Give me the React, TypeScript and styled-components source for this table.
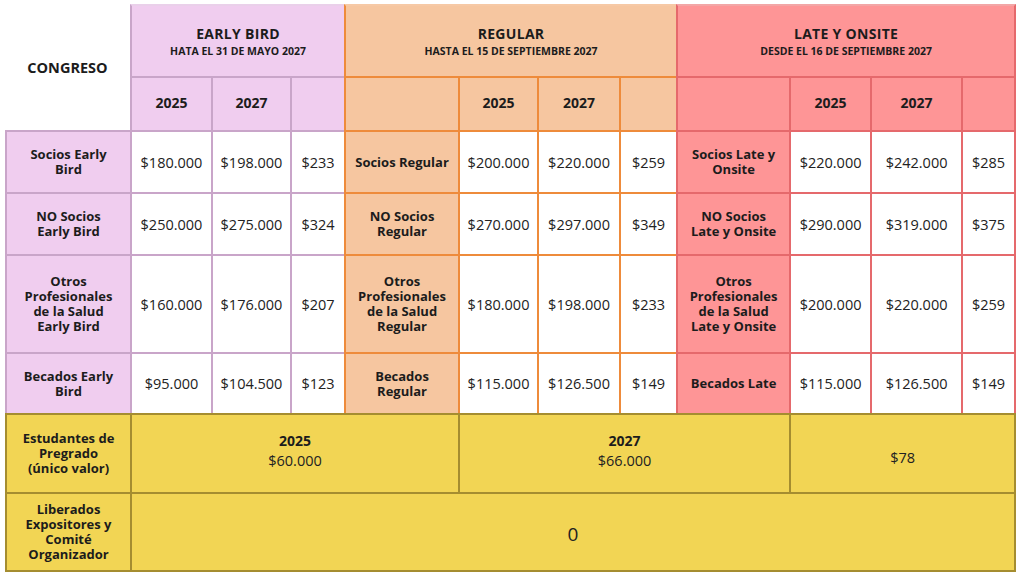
import styled, { createGlobalStyle, css } from "styled-components";

const GlobalStyle = createGlobalStyle`
  html, body {
    margin: 0;
    background: #ffffff;
    font-family: "Open Sans", "Noto Sans", sans-serif;
    color: #1c1c1c;
  }
`;

type Tone = "pink" | "orange" | "red" | "gold";

const palette: Record<Tone, { bg: string; line: string; soft: string }> = {
  pink: { bg: "#f0cdef", line: "#c9a5c9", soft: "#ead0ea" },
  orange: { bg: "#f6c6a0", line: "#ee8b3b", soft: "#f6c9a6" },
  red: { bg: "#fe9596", line: "#e5696c", soft: "#f2a6a6" },
  gold: { bg: "#f2d554", line: "#a58d30", soft: "#a58d30" },
};

const Page = styled.div`
  padding: 4px 8px 0 5px;
`;

const Table = styled.table`
  border-collapse: separate;
  border-spacing: 0;
  table-layout: fixed;
  width: 1011px;
`;

const Row = styled.tr<{ $h: number }>`
  height: ${(p) => p.$h}px;
`;

const Cell = styled.td<{
  $tone?: Tone;
  $fill?: boolean;
  $last?: boolean;
  $bottom?: boolean;
  $softTop?: boolean;
}>`
  box-sizing: border-box;
  padding: 0 6px;
  text-align: center;
  vertical-align: middle;
  font-size: 14.5px;
  line-height: 17px;
  color: #222;
  ${(p) =>
    p.$tone
      ? css`
          background: ${p.$fill ? palette[p.$tone].bg : "#ffffff"};
          border-left: 2px solid ${palette[p.$tone].line};
          border-top: 2px solid
            ${p.$softTop ? palette[p.$tone].soft : palette[p.$tone].line};
          ${p.$last && `border-right: 2px solid ${palette[p.$tone].line};`}
          ${p.$bottom && `border-bottom: 2px solid ${palette[p.$tone].line};`}
        `
      : css`
          background: #ffffff;
        `}
`;

const Label = styled(Cell)`
  font-weight: 700;
  font-size: 13px;
  line-height: 14.8px;
  color: #1c1c1c;
  white-space: pre-line;
  padding: 0 4px;
`;

const Stacked = styled(Cell)`
  line-height: 20px;
  padding-bottom: 5px;
`;

const Single = styled(Cell)`
  padding-top: 8px;
`;

const Corner = styled.td`
  font-weight: 700;
  font-size: 14.5px;
  text-align: center;
  vertical-align: middle;
  padding-top: 2px;
`;

const Title = styled.div`
  font-size: 14px;
  font-weight: 700;
  letter-spacing: 0.3px;
  line-height: 18px;
  color: #1c1c1c;
`;

const Sub = styled.div`
  font-size: 10.5px;
  font-weight: 700;
  line-height: 14px;
  margin-top: 1px;
  color: #1c1c1c;
`;

const Year = styled.span`
  display: block;
  font-weight: 700;
  font-size: 14px;
  color: #1c1c1c;
`;

const HeadYear = styled(Year)`
  padding-bottom: 3px;
`;

const Zero = styled.span`
  display: inline-block;
  font-size: 19px;
  margin-top: 5px;
`;

const widths = [125, 81, 79, 54, 114, 79, 82, 57, 113, 81, 91, 55];

type Tier = { tone: Tone; label: string; v: [string, string, string] };

const rows: { h: number; early: Tier; regular: Tier; late: Tier }[] = [
  {
    h: 62,
    early: { tone: "pink", label: "Socios Early\nBird", v: ["$180.000", "$198.000", "$233"] },
    regular: { tone: "orange", label: "Socios Regular", v: ["$200.000", "$220.000", "$259"] },
    late: { tone: "red", label: "Socios Late y\nOnsite", v: ["$220.000", "$242.000", "$285"] },
  },
  {
    h: 62,
    early: { tone: "pink", label: "NO Socios\nEarly Bird", v: ["$250.000", "$275.000", "$324"] },
    regular: { tone: "orange", label: "NO Socios\nRegular", v: ["$270.000", "$297.000", "$349"] },
    late: { tone: "red", label: "NO Socios\nLate y Onsite", v: ["$290.000", "$319.000", "$375"] },
  },
  {
    h: 98,
    early: {
      tone: "pink",
      label: "Otros\nProfesionales\nde la Salud\nEarly Bird",
      v: ["$160.000", "$176.000", "$207"],
    },
    regular: {
      tone: "orange",
      label: "Otros\nProfesionales\nde la Salud\nRegular",
      v: ["$180.000", "$198.000", "$233"],
    },
    late: {
      tone: "red",
      label: "Otros\nProfesionales\nde la Salud\nLate y Onsite",
      v: ["$200.000", "$220.000", "$259"],
    },
  },
  {
    h: 61,
    early: { tone: "pink", label: "Becados Early\nBird", v: ["$95.000", "$104.500", "$123"] },
    regular: { tone: "orange", label: "Becados\nRegular", v: ["$115.000", "$126.500", "$149"] },
    late: { tone: "red", label: "Becados Late", v: ["$115.000", "$126.500", "$149"] },
  },
];

function TierCells({ tier, last }: { tier: Tier; last?: boolean }) {
  return (
    <>
      <Label $tone={tier.tone} $fill>
        {tier.label}
      </Label>
      {tier.v.map((v, i) => (
        <Cell key={i} $tone={tier.tone} $last={last && i === 2}>
          {v}
        </Cell>
      ))}
    </>
  );
}

export default function App() {
  return (
    <Page>
      <GlobalStyle />
      <Table>
        <colgroup>
          {widths.map((w, i) => (
            <col key={i} style={{ width: w }} />
          ))}
        </colgroup>
        <tbody>
          <Row $h={72}>
            <Corner rowSpan={2}>CONGRESO</Corner>
            <Cell colSpan={3} $tone="pink" $fill $softTop>
              <Title>EARLY BIRD</Title>
              <Sub>HATA EL 31 DE MAYO 2027</Sub>
            </Cell>
            <Cell colSpan={4} $tone="orange" $fill $softTop>
              <Title>REGULAR</Title>
              <Sub>HASTA EL 15 DE SEPTIEMBRE 2027</Sub>
            </Cell>
            <Cell colSpan={4} $tone="red" $fill $softTop $last>
              <Title>LATE Y ONSITE</Title>
              <Sub>DESDE EL 16 DE SEPTIEMBRE 2027</Sub>
            </Cell>
          </Row>
          <Row $h={54}>
            <Cell $tone="pink" $fill>
              <HeadYear>2025</HeadYear>
            </Cell>
            <Cell $tone="pink" $fill>
              <HeadYear>2027</HeadYear>
            </Cell>
            <Cell $tone="pink" $fill />
            <Cell $tone="orange" $fill />
            <Cell $tone="orange" $fill>
              <HeadYear>2025</HeadYear>
            </Cell>
            <Cell $tone="orange" $fill>
              <HeadYear>2027</HeadYear>
            </Cell>
            <Cell $tone="orange" $fill />
            <Cell $tone="red" $fill />
            <Cell $tone="red" $fill>
              <HeadYear>2025</HeadYear>
            </Cell>
            <Cell $tone="red" $fill>
              <HeadYear>2027</HeadYear>
            </Cell>
            <Cell $tone="red" $fill $last />
          </Row>
          {rows.map((r, i) => (
            <Row key={i} $h={r.h}>
              <TierCells tier={r.early} />
              <TierCells tier={r.regular} />
              <TierCells tier={r.late} last />
            </Row>
          ))}
          <Row $h={79}>
            <Label $tone="gold" $fill>
              {"Estudantes de\nPregrado\n(único valor)"}
            </Label>
            <Stacked colSpan={4} $tone="gold" $fill>
              <Year>2025</Year>$60.000
            </Stacked>
            <Stacked colSpan={4} $tone="gold" $fill>
              <Year>2027</Year>$66.000
            </Stacked>
            <Single colSpan={3} $tone="gold" $fill $last>
              $78
            </Single>
          </Row>
          <Row $h={80}>
            <Label $tone="gold" $fill $bottom>
              {"Liberados\nExpositores y\nComité\nOrganizador"}
            </Label>
            <Cell colSpan={11} $tone="gold" $fill $last $bottom>
              <Zero>0</Zero>
            </Cell>
          </Row>
        </tbody>
      </Table>
    </Page>
  );
}
